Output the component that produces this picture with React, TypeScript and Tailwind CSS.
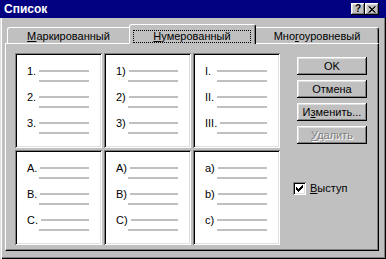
import React from 'react';

const raised = 'shadow-[inset_-1px_-1px_#000,inset_1px_1px_#fff,inset_-2px_-2px_#808080,inset_2px_2px_#dfdfdf]';
const sunken = 'shadow-[inset_1px_1px_#808080,inset_-1px_-1px_#fff,inset_2px_2px_#000,inset_-2px_-2px_#dfdfdf]';

const styles: string[][] = [
  ['1.', '2.', '3.'],
  ['1)', '2)', '3)'],
  ['I.', 'II.', 'III.'],
  ['A.', 'B.', 'C.'],
  ['A)', 'B)', 'C)'],
  ['a)', 'b)', 'c)'],
];

const Cell = ({ labels }: { labels: string[] }) => (
  <div className={`w-[87px] h-[95px] bg-white ${sunken} pt-[12px] pl-[12px] pr-[13px] flex flex-col gap-[9px]`}>
    {labels.map((l) => (
      <div key={l} className="flex flex-col">
        <div className="flex items-center h-[12px]">
          <span className="min-w-[12px] pr-[3px] text-[11px] leading-none text-black">{l}</span>
          <div className="flex-1 h-[2px] bg-[#c0c0c0]" />
        </div>
        <div className="ml-[12px] mt-[3px] h-[2px] bg-[#c0c0c0]" />
      </div>
    ))}
  </div>
);

const Button = ({ children, disabled }: { children: React.ReactNode; disabled?: boolean }) => (
  <div
    className={`w-[70px] h-[18px] bg-[#c0c0c0] ${raised} flex items-center justify-center text-[11px] leading-none ${
      disabled ? 'text-[#808080] [text-shadow:1px_1px_0_#fff]' : 'text-black'
    }`}
  >
    {children}
  </div>
);

export default function App() {
  return (
    <div className="w-[386px] h-[259px] bg-[#c0c0c0] flex flex-col font-['Liberation_Sans',Arial,sans-serif] select-none">
      {/* Title bar */}
      <div className="h-[18px] bg-[#000080] flex items-center justify-between pl-[4px] pr-[7px]">
        <span className="text-white font-bold text-[12px] leading-none">Список</span>
        <div className="flex">
          <div className={`w-[14px] h-[12px] bg-[#c0c0c0] ${raised} flex items-center justify-center text-[10px] font-bold leading-none text-black`}>
            ?
          </div>
          <div className={`w-[14px] h-[12px] bg-[#c0c0c0] ${raised} flex items-center justify-center`}>
            <svg width="8" height="7" viewBox="0 0 8 7">
              <path d="M0.5 0.5 L7 6.5 M1.5 0.5 L7.5 6.5 M7 0.5 L0.5 6.5 M7.5 0.5 L1.5 6.5" stroke="#000" strokeWidth="1" />
            </svg>
          </div>
        </div>
      </div>

      {/* Body */}
      <div className="flex-1 pl-[5px] pr-[7px] pt-[6px] shadow-[inset_1px_0_#dfdfdf,inset_2px_0_#fff,inset_-1px_-1px_#000,inset_-2px_-2px_#808080]">
        {/* Tabs */}
        <div className="h-[19px] flex items-end pl-[2px] text-[11px] leading-none text-black">
          <div className="w-[122px] h-[16px] pt-[2px] flex items-center justify-center border-t border-l border-white rounded-tl-[3px]">
            <span><span className="underline">М</span>аркированный</span>
          </div>
          <div className="relative z-10 w-[127px] h-[20px] -mb-[1px] pt-[5px] bg-[#c0c0c0] border-t border-l border-r border-t-white border-l-white border-r-black rounded-t-[3px] shadow-[inset_-1px_0_#808080]">
            <div className="ml-[3px] mr-[4px] h-[13px] flex items-center justify-center border border-dotted border-black">
              <span><span className="underline">Н</span>умерованный</span>
            </div>
          </div>
          <div className="w-[123px] h-[16px] pt-[2px] flex items-center justify-center border-t border-r border-t-white border-r-black rounded-tr-[3px] shadow-[inset_-1px_0_#808080]">
            <span>Мно<span className="underline">г</span>оуровневый</span>
          </div>
        </div>

        {/* Panel */}
        <div className="h-[208px] border-t border-l border-r border-b border-t-white border-l-white border-r-black border-b-black shadow-[inset_-1px_-1px_#808080] pl-[9px] pt-[9px] flex">
          <div className="grid grid-cols-[87px_87px_87px] gap-[2px] self-start">
            {styles.map((s, i) => (
              <Cell key={i} labels={s} />
            ))}
          </div>

          <div className="ml-[13px] pt-[4px] flex flex-col">
            <div className="ml-[4px] flex flex-col gap-[5px]">
              <Button>OK</Button>
              <Button>Отмена</Button>
              <Button>
                <span>
                  И<span className="underline">з</span>менить...
                </span>
              </Button>
              <Button disabled>
                <span>
                  <span className="underline">У</span>далить
                </span>
              </Button>
            </div>

            <div className="mt-[38px] flex items-center">
              <div className={`w-[13px] h-[13px] bg-white ${sunken} flex items-center justify-center`}>
                <svg width="7" height="7" viewBox="0 0 7 7" shapeRendering="crispEdges">
                  <rect x="6" y="0" width="1" height="1" fill="#000" />
                  <rect x="5" y="1" width="2" height="1" fill="#000" />
                  <rect x="0" y="2" width="1" height="1" fill="#000" />
                  <rect x="4" y="2" width="3" height="1" fill="#000" />
                  <rect x="0" y="3" width="2" height="1" fill="#000" />
                  <rect x="3" y="3" width="3" height="1" fill="#000" />
                  <rect x="0" y="4" width="5" height="1" fill="#000" />
                  <rect x="1" y="5" width="3" height="1" fill="#000" />
                  <rect x="2" y="6" width="1" height="1" fill="#000" />
                </svg>
              </div>
              <span className="ml-[4px] text-[11px] leading-none text-black">
                <span className="underline">В</span>ыступ
              </span>
            </div>
          </div>
        </div>
      </div>
    </div>
  );
}
